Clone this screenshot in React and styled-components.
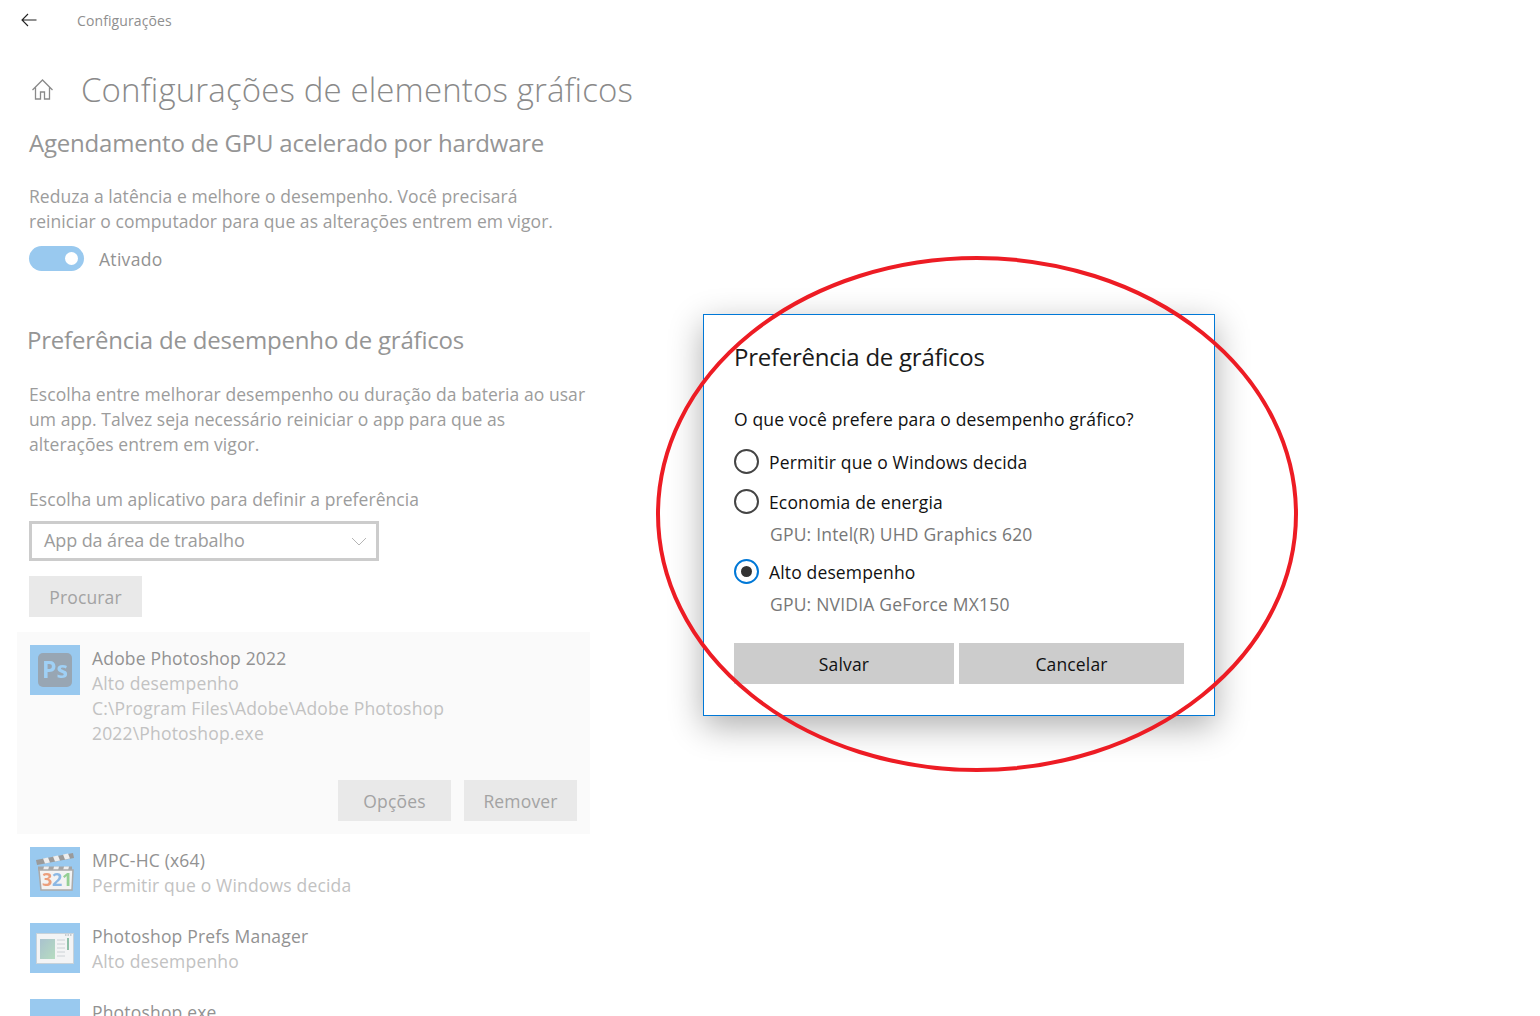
import styled, { createGlobalStyle } from 'styled-components';

const GlobalStyle = createGlobalStyle`
  html, body { margin: 0; padding: 0; background: #fff; height: 100%; overflow: hidden; }
  body { font-family: "Open Sans", "Noto Sans", sans-serif; }
  * { box-sizing: border-box; }
`;

const Page = styled.div`
  position: relative;
  width: 1540px;
  height: 1016px;
  overflow: hidden;
  background: #fff;
`;

const Column = styled.div`
  width: 650px;
  display: flex;
  flex-direction: column;
`;

const TopBar = styled.div`
  height: 40px;
  display: flex;
  align-items: center;
  padding-left: 21px;
  gap: 40px;
`;

const TopLabel = styled.span`
  font-size: 14px;
  letter-spacing: 0.1px;
  color: #8f8f8f;
`;

const TitleRow = styled.div`
  margin-top: 25px;
  height: 48px;
  display: flex;
  align-items: center;
  padding-left: 32px;
  gap: 28px;
  svg {
    flex: none;
  }
`;

const Title = styled.h1`
  margin: 0;
  font-size: 33px;
  font-weight: 300;
  color: #8a8a8a;
  letter-spacing: 0.14px;
  white-space: nowrap;
`;

const Heading = styled.h2`
  margin: ${p => p.$top}px 0 0 ${p => p.$left || 29}px;
  font-size: 24px;
  line-height: 34px;
  font-weight: 400;
  color: #959595;
  letter-spacing: -0.2px;
  white-space: nowrap;
`;

const Paragraph = styled.p`
  margin: ${p => p.$top}px 0 0 29px;
  font-size: 17.5px;
  line-height: 25px;
  color: #9c9c9c;
  letter-spacing: 0.06px;
  white-space: nowrap;
`;

const ToggleRow = styled.div`
  margin: 12px 0 0 29px;
  height: 25px;
  display: flex;
  align-items: center;
  gap: 15px;
  font-size: 17.5px;
  line-height: 25px;
  color: #929292;
  letter-spacing: 0.3px;
`;

const ToggleLabel = styled.span`
  padding-top: 2px;
`;

const Toggle = styled.div`
  width: 55px;
  height: 25px;
  border-radius: 13px;
  background: #99c9ef;
  display: flex;
  align-items: center;
  justify-content: flex-end;
  padding-right: 6px;
  &::after {
    content: '';
    width: 13px;
    height: 13px;
    border-radius: 50%;
    background: #fff;
  }
`;

const Select = styled.div`
  margin: 9px 0 0 29px;
  width: 350px;
  height: 40px;
  border: 3px solid #ccc;
  padding: 0 9px 0 12px;
  display: flex;
  align-items: center;
  justify-content: space-between;
  font-size: 18px;
  color: #9c9c9c;
  letter-spacing: -0.1px;
`;

const SelectLabel = styled.span`
  margin-bottom: 2px;
`;

const GreyButton = styled.div`
  width: 113px;
  height: 41px;
  background: #e9e9e9;
  display: flex;
  align-items: center;
  justify-content: center;
  font-size: 17.5px;
  letter-spacing: 0.15px;
  color: #a3a3a3;
`;

const BrowseWrap = styled.div`
  margin: 15px 0 0 29px;
`;

const SelectedPanel = styled.div`
  margin: 15px 0 0 17px;
  width: 573px;
  height: 202px;
  background: #fafafa;
  padding: 13px;
  display: flex;
  flex-direction: column;
  justify-content: space-between;
`;

const AppRow = styled.div`
  display: flex;
  gap: 12px;
  margin-left: ${p => p.$left || 0}px;
  margin-top: ${p => p.$top || 0}px;
`;

const AppTile = styled.div`
  width: 50px;
  height: 50px;
  flex: none;
  background: #99c9ef;
  display: flex;
  align-items: center;
  justify-content: center;
  svg {
    filter: blur(0.4px);
  }
`;

const AppText = styled.div`
  padding-top: 1px;
  display: flex;
  flex-direction: column;
  font-size: 17.5px;
  line-height: 25px;
  letter-spacing: 0.18px;
  white-space: nowrap;
`;

const AppName = styled.span`
  color: #929292;
`;

const AppMeta = styled.span`
  color: #c2c2c2;
`;

const PanelActions = styled.div`
  display: flex;
  justify-content: flex-end;
  gap: 13px;
`;

const Dialog = styled.div`
  position: absolute;
  left: 703px;
  top: 314px;
  width: 512px;
  height: 402px;
  background: #fff;
  border: 1px solid #0078d7;
  box-shadow: 0 10px 32px rgba(0, 0, 0, 0.32);
  padding: 25px 30px 0;
  display: flex;
  flex-direction: column;
`;

const DialogTitle = styled.h3`
  margin: 0;
  font-size: 24px;
  line-height: 34px;
  font-weight: 400;
  color: #1a1a1a;
  letter-spacing: -0.25px;
`;

const Question = styled.div`
  margin-top: 33px;
  font-size: 17.5px;
  line-height: 25px;
  color: #111;
  letter-spacing: 0.15px;
`;

const Option = styled.div`
  margin-top: ${p => p.$top}px;
  display: flex;
  align-items: center;
  gap: 10px;
  height: 25px;
  font-size: 17.5px;
  line-height: 25px;
  color: #111;
  letter-spacing: 0.15px;
`;

const OptionLabel = styled.span`
  padding-top: 2px;
`;

const Radio = styled.span`
  width: 25px;
  height: 25px;
  border-radius: 50%;
  border: 2.5px solid ${p => (p.$checked ? '#0078d7' : '#444')};
  display: flex;
  align-items: center;
  justify-content: center;
  &::after {
    content: '';
    display: ${p => (p.$checked ? 'block' : 'none')};
    width: 11px;
    height: 11px;
    border-radius: 50%;
    background: #333;
  }
`;

const Hint = styled.div`
  margin: 8px 0 0 36px;
  font-size: 17.5px;
  line-height: 25px;
  color: #777;
  letter-spacing: 0.2px;
`;

const DialogActions = styled.div`
  margin-top: 26px;
  display: flex;
  gap: 5px;
`;

const DialogButton = styled.div`
  width: ${p => p.$width}px;
  height: 41px;
  background: #ccc;
  display: flex;
  align-items: center;
  justify-content: center;
  font-size: 17.5px;
  color: #111;
  letter-spacing: 0.15px;
`;

const CircleMark = styled.svg`
  position: absolute;
  left: 0;
  top: 0;
  pointer-events: none;
`;

const BackIcon = () => (
  <svg width="16" height="14" viewBox="0 0 16 14" fill="none" stroke="#222" strokeWidth="1.1">
    <path d="M15.5 7H1M7 1L1 7l6 6" />
  </svg>
);

const HomeIcon = () => (
  <svg width="21" height="21" viewBox="0 0 21 21" fill="none" stroke="#8a8a8a" strokeWidth="1.3">
    <path d="M0.5 11L10.5 1l10 10M3.500 8.500V20H8.500v-7h4v7h5V8.500" />
  </svg>
);

const Chevron = () => (
  <svg width="16" height="9" viewBox="0 0 16 9" fill="none" stroke="#b5b5b5" strokeWidth="1">
    <path d="M1 1l7 7 7-7" />
  </svg>
);

const PsIcon = () => (
  <svg width="36" height="36" viewBox="0 0 36 36">
    <rect x="1" y="1" width="34" height="34" rx="5" fill="#98a6b3" />
    <text x="18" y="26" textAnchor="middle" fontFamily="Open Sans" fontWeight="700" fontSize="23" fill="#9fd0f5">Ps</text>
  </svg>
);

const ClapIcon = () => (
  <svg width="38" height="38" viewBox="0 0 38 38">
    <path d="M0 7L37 0l1 5L1 12z" fill="#9a9a9a" />
    <path d="M7 5.500l5-1 2 5-5 1zM17 3.500l5-1 2 5-5 1zM27 1.500l5-1 2 5-5 1z" fill="#eeeeee" />
    <path d="M2 13.500h34v4H2z" fill="#a5a5a5" />
    <path d="M8 13.500h5l-1 4H7zM18 13.500h5l-1 4h-5zM28 13.500h5l-1 4h-5z" fill="#eeeeee" />
    <path d="M3 17h34l-1 20H5z" fill="#f3f3f3" stroke="#aaa" strokeWidth="1.5" />
    <text x="6" y="33" fontFamily="Open Sans" fontWeight="700" fontSize="18" fill="#ec9f7c">3</text>
    <text x="16" y="33" fontFamily="Open Sans" fontWeight="700" fontSize="18" fill="#8cb8e4">2</text>
    <text x="26" y="33" fontFamily="Open Sans" fontWeight="700" fontSize="18" fill="#94cf94">1</text>
  </svg>
);

const PrefsIcon = () => (
  <svg width="38" height="31" viewBox="0 0 38 31">
    <defs>
      <linearGradient id="prefsFill" x1="0" y1="0" x2="1" y2="1">
        <stop offset="0" stopColor="#a9c2ce" />
        <stop offset="1" stopColor="#b6dcc0" />
      </linearGradient>
    </defs>
    <rect x="0.5" y="0.5" width="37" height="30" fill="#f3f4f5" stroke="#c8d2d9" />
    <path d="M29 2h1.500M31.500 2h1.500M34 2h1.500" stroke="#9aa5ad" strokeWidth="1" />
    <rect x="4" y="6" width="15" height="20" fill="url(#prefsFill)" />
    <path d="M21 7h8M21 11h8M21 15h8M21 19h8M21 23h8" stroke="#ccd2d6" strokeWidth="1" />
    <rect x="31" y="5" width="2" height="12" fill="#8ebfa8" />
  </svg>
);

const App = () => {
  return (
    <Page>
      <GlobalStyle />
      <Column>
        <TopBar>
          <BackIcon />
          <TopLabel>Configurações</TopLabel>
        </TopBar>
        <TitleRow>
          <HomeIcon />
          <Title>Configurações de elementos gráficos</Title>
        </TitleRow>
        <Heading $top={13}>Agendamento de GPU acelerado por hardware</Heading>
        <Paragraph $top={24}>
          Reduza a latência e melhore o desempenho. Você precisará
          <br />
          reiniciar o computador para que as alterações entrem em vigor.
        </Paragraph>
        <ToggleRow>
          <Toggle />
          <ToggleLabel>Ativado</ToggleLabel>
        </ToggleRow>
        <Heading $top={52} $left={27}>Preferência de desempenho de gráficos</Heading>
        <Paragraph $top={25}>
          Escolha entre melhorar desempenho ou duração da bateria ao usar
          <br />
          um app. Talvez seja necessário reiniciar o app para que as
          <br />
          alterações entrem em vigor.
        </Paragraph>
        <Paragraph $top={30}>Escolha um aplicativo para definir a preferência</Paragraph>
        <Select>
          <SelectLabel>App da área de trabalho</SelectLabel>
          <Chevron />
        </Select>
        <BrowseWrap>
          <GreyButton>Procurar</GreyButton>
        </BrowseWrap>
        <SelectedPanel>
          <AppRow>
            <AppTile><PsIcon /></AppTile>
            <AppText>
              <AppName>Adobe Photoshop 2022</AppName>
              <AppMeta>Alto desempenho</AppMeta>
              <AppMeta>C:\Program Files\Adobe\Adobe Photoshop</AppMeta>
              <AppMeta>2022\Photoshop.exe</AppMeta>
            </AppText>
          </AppRow>
          <PanelActions>
            <GreyButton>Opções</GreyButton>
            <GreyButton>Remover</GreyButton>
          </PanelActions>
        </SelectedPanel>
        <AppRow $left={30} $top={13}>
          <AppTile><ClapIcon /></AppTile>
          <AppText>
            <AppName>MPC-HC (x64)</AppName>
            <AppMeta>Permitir que o Windows decida</AppMeta>
          </AppText>
        </AppRow>
        <AppRow $left={30} $top={25}>
          <AppTile><PrefsIcon /></AppTile>
          <AppText>
            <AppName>Photoshop Prefs Manager</AppName>
            <AppMeta>Alto desempenho</AppMeta>
          </AppText>
        </AppRow>
        <AppRow $left={30} $top={25}>
          <AppTile />
          <AppText>
            <AppName>Photoshop.exe</AppName>
          </AppText>
        </AppRow>
      </Column>

      <Dialog>
        <DialogTitle>Preferência de gráficos</DialogTitle>
        <Question>O que você prefere para o desempenho gráfico?</Question>
        <Option $top={17}><Radio /><OptionLabel>Permitir que o Windows decida</OptionLabel></Option>
        <Option $top={15}><Radio /><OptionLabel>Economia de energia</OptionLabel></Option>
        <Hint>GPU: Intel(R) UHD Graphics 620</Hint>
        <Option $top={12}><Radio $checked /><OptionLabel>Alto desempenho</OptionLabel></Option>
        <Hint>GPU: NVIDIA GeForce MX150</Hint>
        <DialogActions>
          <DialogButton $width={220}>Salvar</DialogButton>
          <DialogButton $width={225}>Cancelar</DialogButton>
        </DialogActions>
      </Dialog>

      <CircleMark width="1540" height="1016" viewBox="0 0 1540 1016" fill="none">
        <ellipse cx="977" cy="514" rx="319" ry="256" stroke="#ed1c24" strokeWidth="4" />
      </CircleMark>
    </Page>
  );
};

export default App;
